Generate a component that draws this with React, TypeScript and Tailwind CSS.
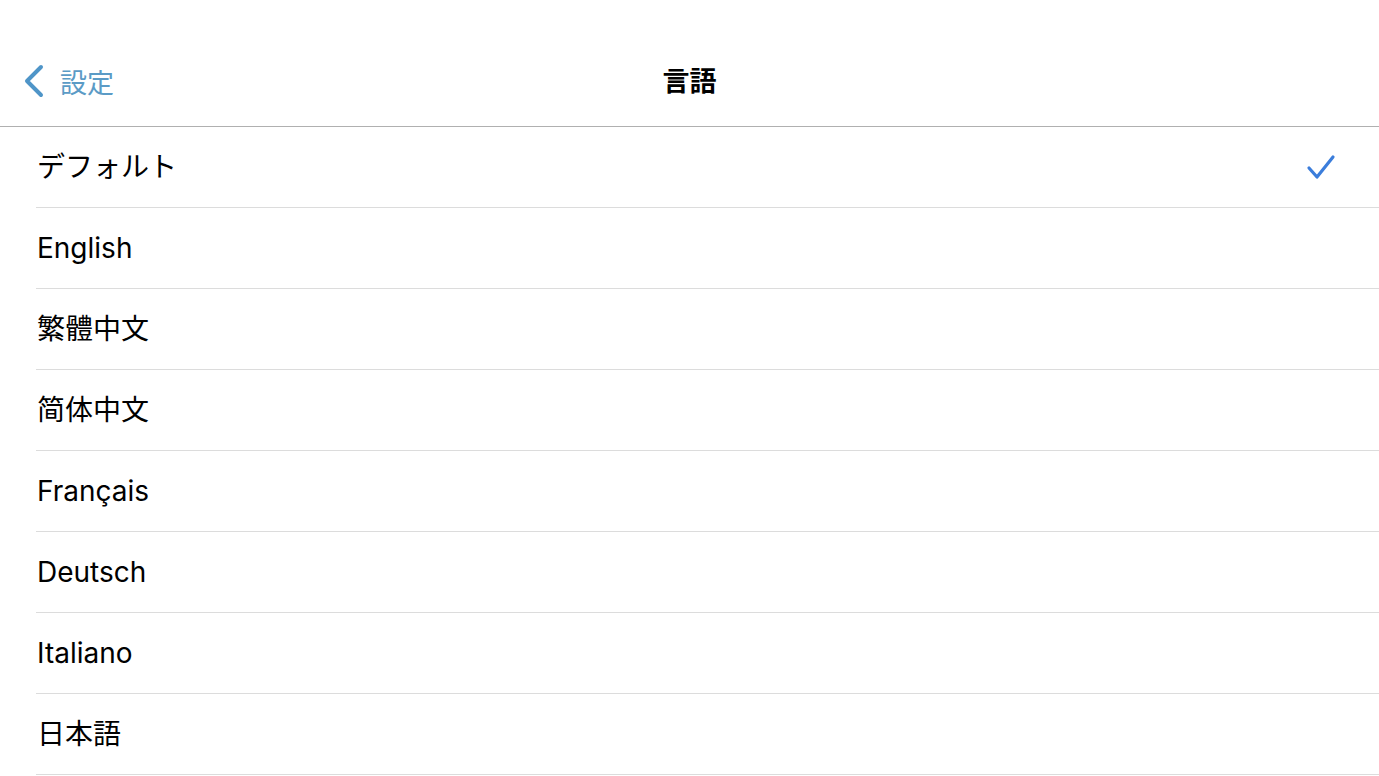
const languages = [
  "デフォルト",
  "English",
  "繁體中文",
  "简体中文",
  "Français",
  "Deutsch",
  "Italiano",
  "日本語",
];

const font = {
  fontFamily: '"SF Pro Text", Inter, "Noto Sans CJK JP", sans-serif',
};

export default function App() {
  const selected = 0;
  return (
    <div className="w-[1379px] h-[776px] bg-white overflow-hidden" style={font}>
      {/* ナビゲーションバー */}
      <header className="relative h-[127px] pt-[36px] border-b border-[#b0b0b0] flex items-center">
        <button className="flex items-center gap-[14px] pl-[22px] text-[#5b9bc6]">
          <svg width="24" height="34" viewBox="0 0 24 34" fill="none">
            <path
              d="M19 3 L5 17 L19 31"
              stroke="#4f95c8"
              strokeWidth="4"
              strokeLinecap="round"
              strokeLinejoin="round"
            />
          </svg>
          <span className="text-[27px] leading-none" style={{ fontFamily: '"Noto Sans CJK JP", sans-serif' }}>
            設定
          </span>
        </button>
        <h1
          className="absolute left-1/2 -translate-x-1/2 top-[66px] text-[27px] leading-none font-bold text-black"
          style={{ fontFamily: '"Noto Sans CJK JP", sans-serif' }}
        >
          言語
        </h1>
      </header>

      {/* 言語リスト */}
      <ul className="pl-[36px]">
        {languages.map((lang, i) => (
          <li
            key={lang}
            className="h-[81px] border-b border-[#dcdcdc] flex items-center justify-between pr-[42px]"
          >
            <span className="pl-[1px] text-[28px] leading-none text-black">{lang}</span>
            {i === selected && (
              <svg width="32" height="32" viewBox="0 0 32 32" fill="none">
                <path
                  d="M4 17 L12 26 L28 6"
                  stroke="#3b7ddb"
                  strokeWidth="3.2"
                  strokeLinecap="round"
                  strokeLinejoin="round"
                />
              </svg>
            )}
          </li>
        ))}
      </ul>
    </div>
  );
}
